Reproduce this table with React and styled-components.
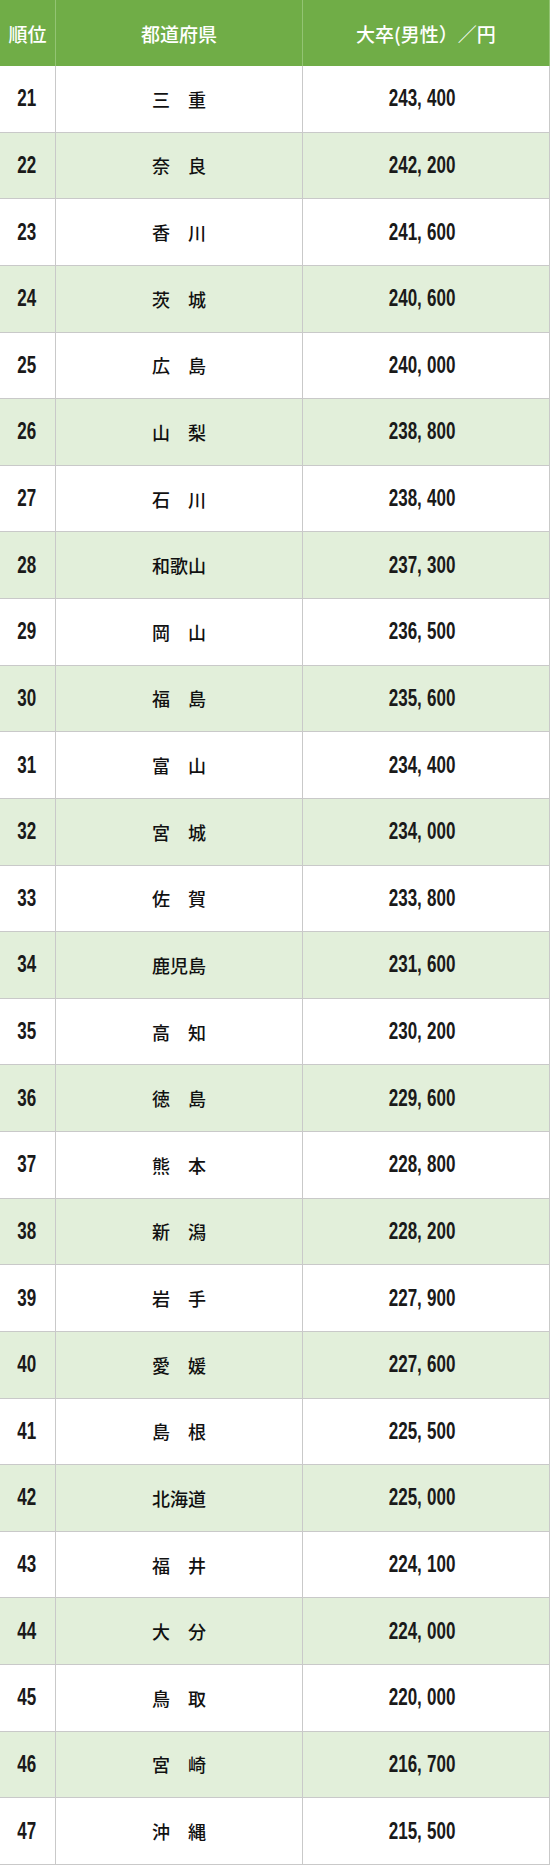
import styled, { createGlobalStyle } from "styled-components";

const rows = [
  [21, "三　重", "243,400"],
  [22, "奈　良", "242,200"],
  [23, "香　川", "241,600"],
  [24, "茨　城", "240,600"],
  [25, "広　島", "240,000"],
  [26, "山　梨", "238,800"],
  [27, "石　川", "238,400"],
  [28, "和歌山", "237,300"],
  [29, "岡　山", "236,500"],
  [30, "福　島", "235,600"],
  [31, "富　山", "234,400"],
  [32, "宮　城", "234,000"],
  [33, "佐　賀", "233,800"],
  [34, "鹿児島", "231,600"],
  [35, "高　知", "230,200"],
  [36, "徳　島", "229,600"],
  [37, "熊　本", "228,800"],
  [38, "新　潟", "228,200"],
  [39, "岩　手", "227,900"],
  [40, "愛　媛", "227,600"],
  [41, "島　根", "225,500"],
  [42, "北海道", "225,000"],
  [43, "福　井", "224,100"],
  [44, "大　分", "224,000"],
  [45, "鳥　取", "220,000"],
  [46, "宮　崎", "216,700"],
  [47, "沖　縄", "215,500"],
];

const GlobalStyle = createGlobalStyle`
  body {
    margin: 0;
    background: #fff;
  }
`;

const Table = styled.div`
  width: 550px;
  display: flex;
  flex-direction: column;
  font-family: "Noto Sans CJK JP", sans-serif;
`;

const Row = styled.div`
  display: grid;
  grid-template-columns: 56px 247px 247px;
  box-sizing: border-box;
  height: ${(p) => (p.$head ? "66px" : "66.63px")};
  background: ${(p) => (p.$head ? "#70ad47" : p.$alt ? "#e2efda" : "#fff")};
  border-bottom: ${(p) => (p.$head ? "none" : "1.5px solid #c9c9c9")};
`;

const Cell = styled.div`
  display: flex;
  align-items: center;
  justify-content: center;
  box-sizing: border-box;
  padding-right: ${(p) => p.$shift || 0}px;
  border-right: 1.5px solid ${(p) => (p.$head ? "#93c473" : "#c9c9c9")};
  color: ${(p) => (p.$head ? "#fff" : "#111")};
  font-size: ${(p) => (p.$head ? "19px" : "18px")};
  font-weight: 500;
`;

const Num = styled.span`
  display: inline-block;
  font-family: "Liberation Sans", Arial, sans-serif;
  font-size: 23px;
  font-weight: 700;
  color: #1a1a1a;
  transform: scaleX(0.74);
  white-space: nowrap;
`;

const Comma = styled.span`
  margin-right: 7px;
`;

function Amount({ value }) {
  const [head, tail] = value.split(",");
  return (
    <Num>
      {head}
      <Comma>,</Comma>
      {tail}
    </Num>
  );
}

export default function App() {
  return (
    <>
      <GlobalStyle />
      <Table>
        <Row $head>
          <Cell $head>順位</Cell>
          <Cell $head>都道府県</Cell>
          <Cell $head>大卒(男性）／円</Cell>
        </Row>
        {rows.map(([rank, pref, pay], i) => (
          <Row key={rank} $alt={i % 2 === 1}>
            <Cell $shift={2}>
              <Num>{rank}</Num>
            </Cell>
            <Cell>{pref}</Cell>
            <Cell $shift={8}>
              <Amount value={pay} />
            </Cell>
          </Row>
        ))}
      </Table>
    </>
  );
}
